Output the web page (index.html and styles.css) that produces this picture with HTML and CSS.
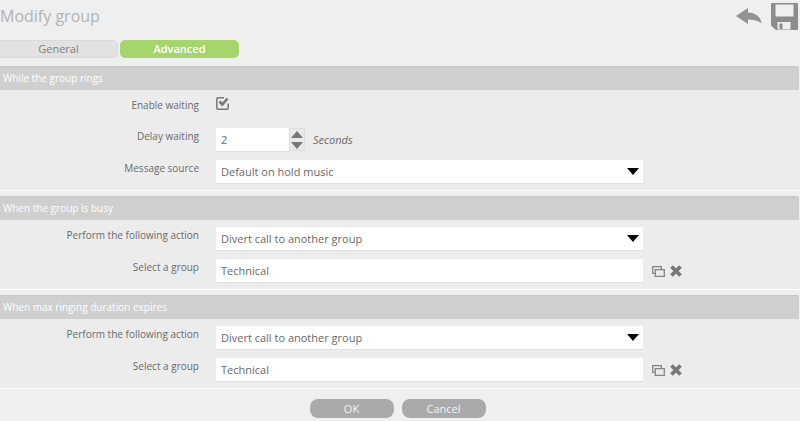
FILE: index.html
```html
<!DOCTYPE html>
<html lang="en">
<head>
<meta charset="utf-8">
<title>Modify group</title>
<link rel="stylesheet" href="styles.css">
</head>
<body>
<header class="top">
  <h1>Modify group</h1>
  <div class="tools">
    <button type="button" class="icon-button" aria-label="Back">
      <svg width="26" height="16" viewBox="0 0 26 16"><path fill="#929292" d="M0 8 12 0v4.500C20 5 25 9 25.500 15.500 22 12.500 18 11.500 12 11.500V16z"/></svg>
    </button>
    <button type="button" class="icon-button" aria-label="Save">
      <svg width="27" height="27" viewBox="0 0 27 27"><path fill="#8c8c8c" fill-rule="evenodd" d="M1 0h25q1 0 1 1v25q0 1-1 1H5L0 22.500V1q0-1 1-1zM4.500 1.500v12h18v-12zM6.500 19v7.500h13V19zM8.500 20.500h3V26h-3z"/></svg>
    </button>
  </div>
</header>
<nav class="tabs">
  <button type="button" class="tab">General</button>
  <button type="button" class="tab active">Advanced</button>
</nav>
<form>
  <section>
    <h2>While the group rings</h2>
    <div class="rows">
      <div class="row check-row">
        <label for="waiting">Enable waiting</label>
        <span class="check">
          <input type="checkbox" id="waiting" checked>
          <svg width="14" height="13" viewBox="0 0 14 13" fill="none" stroke="#777"><path stroke-width="1.500" d="M8 .8H2Q.8.800.8 2v9Q.8 12.200 2 12.200h9q1.200 0 1.200-1.200V6.500"/><path stroke-width="2.600" d="M3.500 4.500 6.300 7.500 11.500 1.500"/></svg>
        </span>
      </div>
      <div class="row">
        <label for="delay">Delay waiting</label>
        <div class="number">
          <input type="text" inputmode="numeric" id="delay" value="2">
          <div class="spin">
            <button type="button" aria-label="Increase"><svg width="12" height="7" viewBox="0 0 12 7"><path fill="#777" d="M0 7 6 0l6 7z"/></svg></button>
            <button type="button" aria-label="Decrease"><svg width="12" height="7" viewBox="0 0 12 7"><path fill="#777" d="M0 0h12L6 7z"/></svg></button>
          </div>
          <em>Seconds</em>
        </div>
      </div>
      <div class="row">
        <label for="source">Message source</label>
        <div class="select"><select id="source"><option>Default on hold music</option></select><svg width="12" height="7" viewBox="0 0 12 7"><path d="M0 0h12L6 7z"/></svg></div>
      </div>
    </div>
  </section>
  <section>
    <h2>When the group is busy</h2>
    <div class="rows">
      <div class="row">
        <label for="busy-action">Perform the following action</label>
        <div class="select"><select id="busy-action"><option>Divert call to another group</option></select><svg width="12" height="7" viewBox="0 0 12 7"><path d="M0 0h12L6 7z"/></svg></div>
      </div>
      <div class="row">
        <label for="busy-group">Select a group</label>
        <input type="text" id="busy-group" value="Technical">
        <div class="actions">
          <button type="button" class="icon-button" aria-label="Browse groups"><svg width="13" height="11" viewBox="0 0 13 11" fill="none" stroke="#858585" stroke-width="1.300"><path d="M3 7.400H.7V.7h8.600V3"/><path d="M3.300 3.600h9v6.700h-9z"/></svg></button>
          <button type="button" class="icon-button" aria-label="Clear group"><svg width="12" height="12" viewBox="0 0 12 12"><path stroke="#777" stroke-width="3.800" d="M1.500 1.500l9 9M10.500 1.500l-9 9"/></svg></button>
        </div>
      </div>
    </div>
  </section>
  <section>
    <h2>When max ringing duration expires</h2>
    <div class="rows">
      <div class="row">
        <label for="max-action">Perform the following action</label>
        <div class="select"><select id="max-action"><option>Divert call to another group</option></select><svg width="12" height="7" viewBox="0 0 12 7"><path d="M0 0h12L6 7z"/></svg></div>
      </div>
      <div class="row">
        <label for="max-group">Select a group</label>
        <input type="text" id="max-group" value="Technical">
        <div class="actions">
          <button type="button" class="icon-button" aria-label="Browse groups"><svg width="13" height="11" viewBox="0 0 13 11" fill="none" stroke="#858585" stroke-width="1.300"><path d="M3 7.400H.7V.7h8.600V3"/><path d="M3.300 3.600h9v6.700h-9z"/></svg></button>
          <button type="button" class="icon-button" aria-label="Clear group"><svg width="12" height="12" viewBox="0 0 12 12"><path stroke="#777" stroke-width="3.800" d="M1.500 1.500l9 9M10.500 1.500l-9 9"/></svg></button>
        </div>
      </div>
    </div>
  </section>
  <footer>
    <button type="submit">OK</button>
    <button type="button">Cancel</button>
  </footer>
</form>
</body>
</html>
```
FILE: styles.css
```css
* { box-sizing: border-box; }
body {
  margin: 0;
  background: #efefef;
  color: #6a6a6a;
  font: 11px/16px "Open Sans", "Noto Sans", sans-serif;
}
button, input, select { font: inherit; color: inherit; margin: 0; border: 0; border-radius: 0; }
button { padding: 0; cursor: pointer; }
svg { display: block; }
.icon-button { background: none; }

.top {
  display: flex;
  justify-content: space-between;
  align-items: center;
  height: 32px;
  padding-right: 2px;
}
h1 { margin: 0; font-size: 16px; font-weight: 400; line-height: 24px; color: #b3b3b3; }
.tools { display: flex; align-items: center; gap: 9px; }

.tabs { display: flex; gap: 2px; margin: 8px 0; }
.tab {
  width: 119px;
  height: 18px;
  border: 1px solid #dadada;
  border-radius: 5px;
  background: #e2e2e2;
  color: #808080;
  line-height: 16px;
}
.tab:first-child { width: 118px; border-left: 0; border-radius: 0 5px 5px 0; }
.tab.active { border-color: #a5d56c; background: #a5d56c; color: #fff; font-weight: 600; }

section {
  margin: 0 1px 5px 0;
  background: #ececec;
  border-bottom: 1px solid #fff;
}
h2 {
  margin: 0;
  padding: 0 3px;
  background: #cfcfcf;
  border-top: 1px solid #c8c8c8;
  border-top-right-radius: 2px;
  color: #fff;
  font-size: 10px;
  font-weight: 400;
  line-height: 23px;
}
.rows { display: flex; flex-direction: column; gap: 8px; padding: 7px 0 6px; }
.row {
  display: grid;
  grid-template-columns: 199px minmax(0, 427px) auto;
  column-gap: 17px;
  justify-content: start;
}
.check-row { min-height: 23px; }
label { text-align: right; font-size: 10px; }
.row input[type="text"], select {
  width: 100%;
  height: 24px;
  padding: 0 5px;
  background: #fff;
  border-bottom: 1px solid #e2e2e2;
}
.check { position: relative; width: 14px; height: 13px; }
.check input { position: absolute; inset: 0; opacity: 0; }
.number { display: flex; }
.row .number input { width: 73px; }
.spin {
  display: flex;
  flex-direction: column;
  justify-content: center;
  align-items: center;
  gap: 4px;
  width: 16px;
  height: 23px;
  background: #e9e9e9;
  border: 1px solid #dfdfdf;
}
.spin button { background: none; }
em { margin-left: 8px; line-height: 24px; }
.select { position: relative; }
select { appearance: none; }
.select svg { position: absolute; right: 4px; top: 8px; pointer-events: none; }
.actions { display: flex; align-items: center; gap: 5px; margin-left: -8px; }

footer { display: flex; justify-content: center; gap: 8px; padding: 5px 5px 3px 0; }
footer button {
  width: 84px;
  height: 19px;
  border-radius: 8px;
  background: #aaa;
  color: #f4f4f4;
  line-height: 19px;
}
```
